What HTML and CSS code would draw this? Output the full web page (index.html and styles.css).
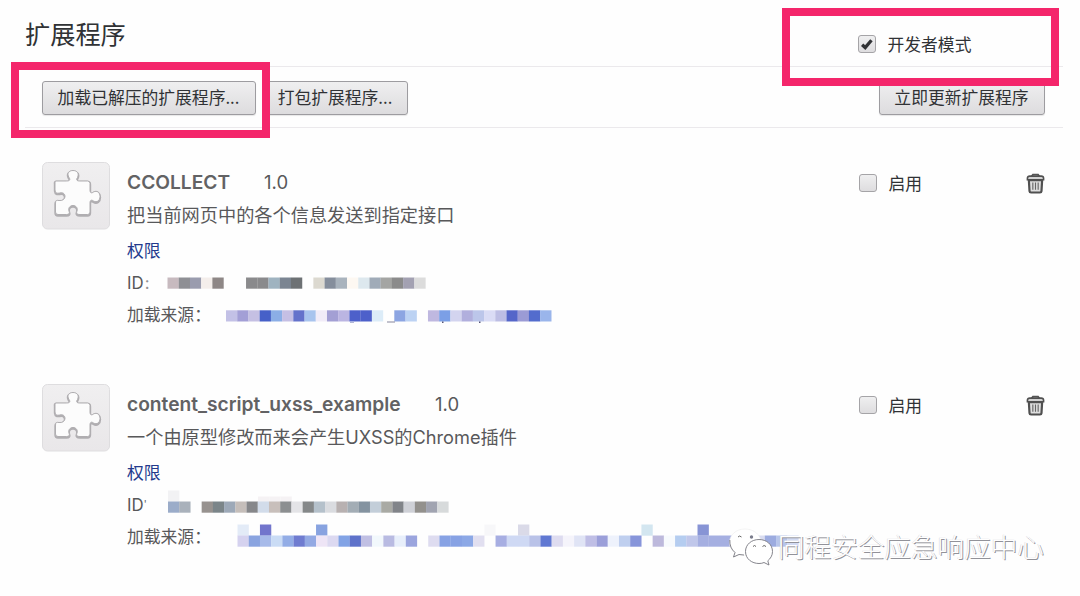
FILE: index.html
```html
<!DOCTYPE html>
<html lang="zh-CN">
<head>
<meta charset="utf-8">
<title>扩展程序</title>
<link rel="stylesheet" href="styles.css">
</head>
<body>
<svg class="defs" width="0" height="0">
  <defs>
    <linearGradient id="tile" x1="0" y1="0" x2="0" y2="1"><stop offset="0" stop-color="#f0eff0"/><stop offset="1" stop-color="#e9e7e9"/></linearGradient>
    <path id="piece" d="M14 19H24.500C28 19 28.500 17.500 27 15.500C24.500 11.500 27 8.500 31 8.500C35 8.500 37.500 11.500 35.500 15.500C34 17.500 34.500 19 37.500 19H45.500Q48 19 48 21.500V28C48 31 49.500 31.500 51.500 30C55 28 58 30.500 58 34.500C58 38.500 55 41 51.500 39C49.500 37.500 48 38 48 41V50Q48 52.500 45.500 52.500H38C35 52.500 34 51.500 35 49C36 46 34 43.500 31 43.500C28 43.500 26 46 27 49C28 51.500 27 52.500 24.500 52.500H16Q13.500 52.500 13.500 50V41C13.500 38.500 14.500 38 17 38.500C20.500 39 23 37 23 34.500C23 31.500 20.500 30 17.500 31C14.500 31.500 13.500 31 13 28V21Q12.500 19 14 19Z"/>
    <symbol id="puzzle" viewBox="0 0 68 68">
      <rect x=".5" y=".5" width="67" height="66.500" rx="5" fill="url(#tile)" stroke="#dedddf"/>
      <use href="#piece" y="1" fill="#b0aeb1" stroke="#b0aeb1" stroke-width="2.400"/>
      <use href="#piece" fill="#fcfcfc" stroke="#b0aeb1" stroke-width="1"/>
    </symbol>
    <symbol id="trash" viewBox="0 0 20 22">
      <path d="M6 3.500L7.300 1.700H12.700L14 3.500" fill="none" stroke="#555" stroke-width="1.900"/>
      <path d="M1.500 7V5.500Q1.500 3.200 4 3.200H16Q18.500 3.200 18.500 5.500V7Z" fill="#d2d2d2" stroke="#505050" stroke-width="1.700"/>
      <path d="M3 7.500H17L16.300 19Q16.200 20.500 14.700 20.500H5.300Q3.800 20.500 3.700 19Z" fill="#dedede" stroke="#505050" stroke-width="2.300"/>
      <path d="M7.200 10V17.500M10 10V17.500M12.800 10V17.500" stroke="#666" stroke-width="1.200"/>
    </symbol>
  </defs>
</svg>
<div class="page">
  <header class="header">
    <h1 class="title">扩展程序</h1>
    <label class="check dev"><span class="box"><svg class="tick" viewBox="0 0 18 18"><path d="M3.500 9.800L7 13L14 4.800" fill="none" stroke="#303235" stroke-width="3.700"/></svg></span>开发者模式</label>
  </header>
  <div class="toolbar">
    <button class="btn load">加载已解压的扩展程序...</button>
    <button class="btn pack">打包扩展程序...</button>
    <button class="btn update">立即更新扩展程序</button>
  </div>
  <main class="list">
    <section class="item">
      <svg class="icon"><use href="#puzzle"/></svg>
      <div class="info">
        <div class="heading"><h2 class="name name-a">CCOLLECT</h2><span class="version">1.0</span></div>
        <p class="desc">把当前网页中的各个信息发送到指定接口</p>
        <a class="perm">权限</a>
        <p class="meta">ID<span class="colon">:</span></p>
        <p class="meta">加载来源：</p>
      </div>
      <label class="check"><span class="box"></span>启用</label>
      <svg class="trash"><use href="#trash"/></svg>
    </section>
    <section class="item">
      <svg class="icon"><use href="#puzzle"/></svg>
      <div class="info">
        <div class="heading"><h2 class="name name-b">content_script_uxss_example</h2><span class="version">1.0</span></div>
        <p class="desc">一个由原型修改而来会产生UXSS的Chrome插件</p>
        <a class="perm">权限</a>
        <p class="meta">ID<span class="cut">'</span></p>
        <p class="meta">加载来源：</p>
      </div>
      <label class="check"><span class="box"></span>启用</label>
      <svg class="trash"><use href="#trash"/></svg>
    </section>
  </main>
  <svg class="mosaic" id="mosaic" viewBox="0 0 1080 596"></svg>
  <div class="frame frame-load"></div>
  <div class="frame frame-dev"></div>
  <div class="watermark">
    <svg class="wechat" viewBox="0 0 46 40">
      <path d="M17 2C8 2 1.500 8 1.500 15.500C1.500 20 3.500 23 7 25.500L5.500 30L11 27.500Q16 29.500 20 28C30 28 33 22 33 15.500C33 8 26 2 17 2Z" fill="#fff" stroke="#ececec" stroke-width=".6"/>
      <path d="M1.800 13Q1.500 21 7 25.500L5.500 30L11 27.500L16 28" fill="none" stroke="#77777f" stroke-width=".9"/>
      <path d="M31 12.500C23.500 12.500 17.500 17.500 17.500 24.500C17.500 32 24 36.500 31 36.500Q34 36.500 36 35.500L41 38L39.800 33.800C42.500 31.500 44.500 28.500 44.500 24.500C44.500 17.500 38.500 12.500 31 12.500Z" fill="#fff" stroke="#77777f" stroke-width=".9"/>
      <path d="M10 10Q11.500 8 13.500 10M25 19.500Q26.500 17.500 28 19.500M34.500 19.500Q36 17.500 38 19.500" fill="none" stroke="#666" stroke-width="1"/>
      <circle cx="23.500" cy="10" r="1.700" fill="#7a7c8c"/>
    </svg>
    <span class="mark">同程安全应急响应中心</span>
  </div>
</div>
<script src="mosaic.js"></script>
</body>
</html>
```
FILE: styles.css
```css
* { box-sizing: border-box; }
body {
  margin: 0;
  background: #fefefe;
  color: #303235;
  font-family: Inter, "Noto Sans CJK SC", sans-serif;
}
h1, h2, p { margin: 0; font-weight: 400; }
.defs { position: absolute; }
.page { position: relative; width: 1080px; height: 596px; overflow: hidden; }
.header {
  display: flex;
  justify-content: space-between;
  height: 67px;
  margin: 0 17px 0 25px;
  border-bottom: 1px solid #ebe9ec;
}
.title { font-size: 25.2px; line-height: 36px; padding-top: 17px; }
.check {
  display: flex;
  align-items: center;
  gap: 11.5px;
  height: 24px;
  font-size: 16.8px;
  white-space: nowrap;
}
.dev { width: 205px; margin-top: 32px; }
.box {
  width: 18px;
  height: 18px;
  border: 1px solid #a5a4a7;
  border-radius: 3px;
  background: linear-gradient(#efeff0, #dedddf);
}
.tick { display: block; width: 16px; height: 16px; }
.toolbar {
  display: flex;
  gap: 7px;
  height: 61px;
  margin-right: 17px;
  margin-left: 25px;
  padding: 14px 18px 0 17px;
  border-bottom: 1px solid #ebe9ec;
}
.btn {
  height: 34px;
  padding: 0 1px 3px 0;
  border: 1px solid #9d9ca0;
  border-radius: 3px;
  background: linear-gradient(#efeff0, #dddcde);
  box-shadow: 0 1px 1px #00000018;
  color: #303235;
  font: 16.8px/28px "Noto Sans CJK SC", sans-serif;
  white-space: nowrap;
}
.load { width: 214px; }
.pack { width: 145px; }
.update { width: 166px; margin-left: auto; }
.list { padding: 34px 35px 0 42px; }
.item {
  display: grid;
  grid-template-columns: 68px 732px 168px 20px;
  height: 222px;
}
.icon { width: 68px; height: 68px; }
.info { padding-left: 17px; color: #58585a; }
.heading { display: flex; height: 37px; line-height: 40px; }
.name { font-size: 19.2px; font-weight: 600; white-space: nowrap; color: #626264; }
.name-a { width: 137px; }
.name-b { width: 308px; }
.version { font-size: 18.5px; }
.desc { font-size: 18.2px; line-height: 32px; height: 34px; white-space: nowrap; }
.perm { display: block; height: 34px; color: #233a8d; font-size: 16.8px; line-height: 36px; }
.meta { height: 31.5px; font-size: 16.8px; line-height: 32px; }
.colon { margin-left: 1px; color: #929294; }
.cut { font-size: 10px; line-height: 1; vertical-align: 3px; }
.item .check { width: auto; margin-left: 17px; margin-top: 9px; }
.trash { width: 19px; height: 21px; margin-top: 11px; margin-left: 16px; }
.mosaic { position: absolute; inset: 0; width: 1080px; height: 596px; }
.frame { position: absolute; border: 8px solid #f4266b; }
.frame-load { left: 11px; top: 62px; width: 259px; height: 76px; }
.frame-dev { left: 782px; top: 8px; width: 277px; height: 78px; }
.watermark { position: absolute; left: 728px; top: 527px; display: flex; gap: 4px; }
.wechat { width: 46px; height: 40px; }
.mark {
  color: #fff;
  font: 300 26.6px/38px "Noto Sans CJK SC", sans-serif;
  text-shadow: 1px 1px 0 #929299, -.5px -.5px 0 #d8d8dd;
  white-space: nowrap;
}
```
FILE: mosaic.js
```js
// Each strip: left, top, colours of consecutive cells ("-" leaves a gap).
const CELL = 11.22;
const strips = [
  [167.5, 277.5, "c7babf 8e8f94 9a9cae f4eeeb 8e8786 - - 8a8a8c 8a8a8c 9fb3c0 7b8592 6d7174 - dcd9d0 858e9c a9b3bd fdf8f2 dde8ee a0abb8 a4a5a3 8b8b8b a3a1b2 dcdcdc"],
  [226, 310.3, "c3c1e6 a39fd6 c5c0e3 4660c8 8baee6 c5bfe4 6472cb a8c4ee f1ecf8 a39fd4 bbb5e2 4d60ca 4d60ca dcecf8 - 8ca5e2 bcd2f3 - bfb8e0 7b9fe6 d3d4ef b1afdd bcc6ea dadcf5 bdbee4 5566c9 9b9bd5 536ccd 9ab5eb"],
  [168, 490.5, "f2f2f4"],
  [258, 496.5, "f5f2f4 f5f2f4 f5f2f4"],
  [168, 501.5, "9bacc9 a9b1bb - 97928f 7b8589 9da9b8 c5beba 86878a d2dcea c8bfbb 8c8f91 e4e4e7 858889 b5c1cb dadce0 b8b1b1 a3adb5 8493a0 c3ced9 a9aaa4 818489 cfd1d7 93918d a1a4b1 d7dadb"],
  [237.5, 524.5, "e3ebf7 - 7275cc - - - - 88a3e0 - - - - - - - - - - - - - - f7f7f9 - - dadae8 - - - - - - - - - - d3e6f0 - - - - 8794d5"],
  [237.5, 535.5, "d5d2ef 8aa4e0 a7bae9 cadcf5 93ade6 6f7cd0 93a9e3 eee5f6 dcd9f1 82a3e5 5e72ca c0bfe3 f2f8fc b9bbe2 e8effb 9ba5de - dedcf0 87a2e4 87a2e4 8ca8e6 e1dff0 - a7aee2 cfd9f4 cfd9f4 b9c2e8 6078d2 dedcf0 f5f4fb e0e4f5 bfbee5 9b9fd9 eef2fc bfcfef 8795da - bdb9dc f7fafd b5cdf0 c0c7ea a5afe1 a5afe1 a5afe1 c7cdeb d9dcf0 d9dcf0 9cabdf b8c5ea d2dbf3"]
];
const svg = document.getElementById("mosaic");
const rect = (x, y, w, h, fill) => {
  const r = document.createElementNS("http://www.w3.org/2000/svg", "rect");
  Object.entries({ x, y, width: w, height: h, fill }).forEach(([k, v]) => r.setAttribute(k, v));
  svg.appendChild(r);
};
for (const [x, y, cells] of strips) {
  cells.split(" ").forEach((c, i) => {
    if (c !== "-") rect(x + i * CELL, y, CELL + 0.1, 11.2, "#" + c);
  });
}
// Text fragments left below the second strip.
rect(350, 322, 4, 1, "#b2b7d5");
rect(387, 321.5, 8, 1, "#85859c");
rect(442, 321.5, 1.5, 1.5, "#555578");
rect(479, 321.5, 1.5, 1.5, "#555578");
```
